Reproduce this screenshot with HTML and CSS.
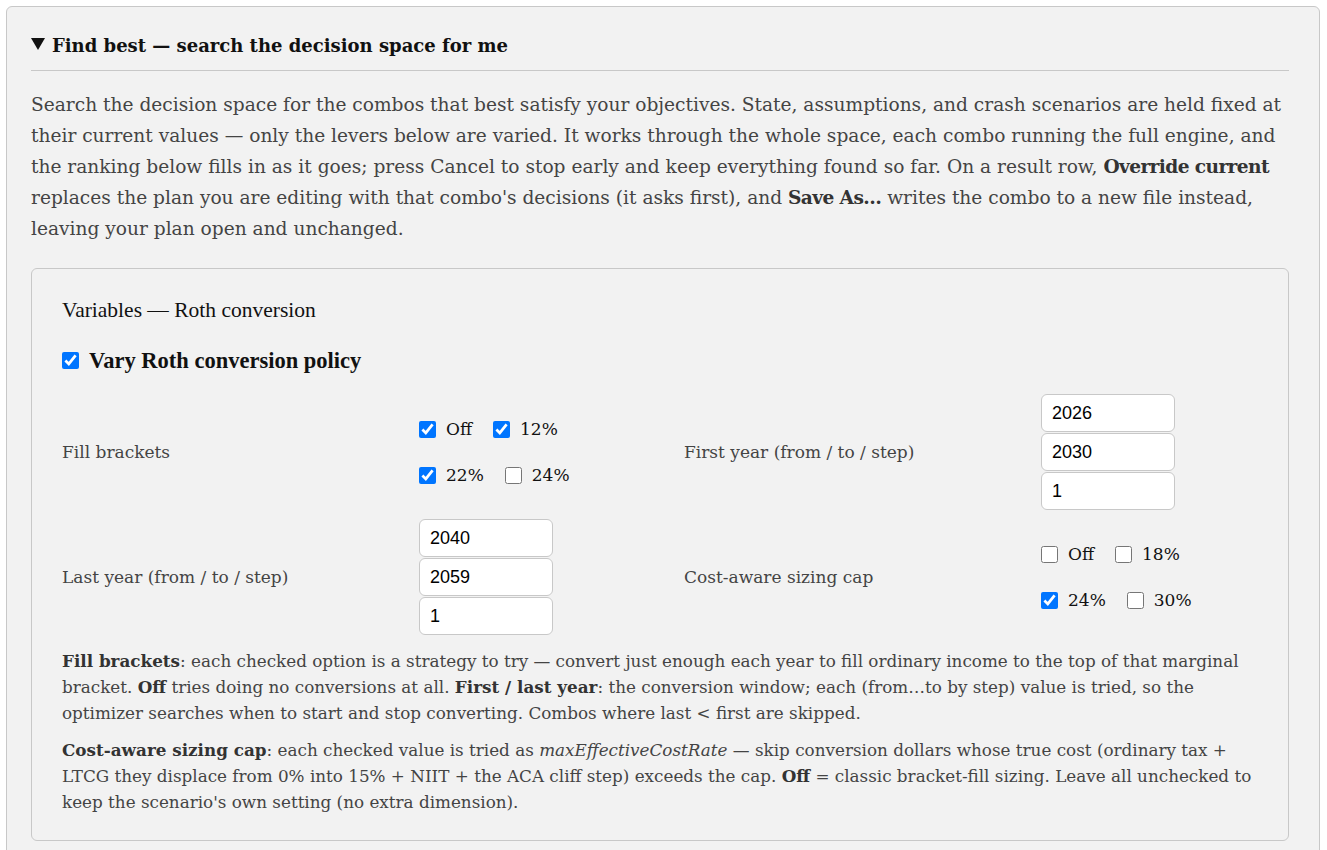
FILE: index.html
```html
<!DOCTYPE html>
<html lang="en">

<head>
  <meta charset="UTF-8">
  <meta name="viewport" content="width=device-width, initial-scale=1.0">
  <title>Find best</title>
  <link rel="stylesheet" href="styles.css">
</head>

<body>
  <details class="finder" open>
    <summary>Find best — search the decision space for me</summary>
    <p class="intro">Search the decision space for the combos that best satisfy your objectives. State, assumptions, and crash scenarios are held fixed at their current values — only the levers below are varied. It works through the whole space, each combo running the full engine, and the ranking below fills in as it goes; press Cancel to stop early and keep everything found so far. On a result row, <b>Override current</b> replaces the plan you are editing with that combo's decisions (it asks first), and <b>Save As…</b> writes the combo to a new file instead, leaving your plan open and unchanged.</p>

    <fieldset class="group">
      <div class="group-title">Variables — Roth conversion</div>
      <label class="vary"><input type="checkbox" checked> Vary Roth conversion policy</label>

      <div class="grid">
        <div class="label">Fill brackets</div>
        <div class="checks">
          <div class="check-row">
            <label><input type="checkbox" checked> Off</label>
            <label><input type="checkbox" checked> 12%</label>
          </div>
          <div class="check-row">
            <label><input type="checkbox" checked> 22%</label>
            <label><input type="checkbox"> 24%</label>
          </div>
        </div>
        <div class="label">First year (from / to / step)</div>
        <div class="range">
          <input type="text" value="2026">
          <input type="text" value="2030">
          <input type="text" value="1">
        </div>

        <div class="label">Last year (from / to / step)</div>
        <div class="range">
          <input type="text" value="2040">
          <input type="text" value="2059">
          <input type="text" value="1">
        </div>
        <div class="label">Cost-aware sizing cap</div>
        <div class="checks">
          <div class="check-row">
            <label><input type="checkbox"> Off</label>
            <label><input type="checkbox"> 18%</label>
          </div>
          <div class="check-row">
            <label><input type="checkbox" checked> 24%</label>
            <label><input type="checkbox"> 30%</label>
          </div>
        </div>
      </div>

      <p class="note"><b>Fill brackets</b>: each checked option is a strategy to try — convert just enough each year to fill ordinary income to the top of that marginal bracket. <b>Off</b> tries doing no conversions at all. <b>First / last year</b>: the conversion window; each (from…to by step) value is tried, so the optimizer searches when to start and stop converting. Combos where last &lt; first are skipped.</p>
      <p class="note"><b>Cost-aware sizing cap</b>: each checked value is tried as <i>maxEffectiveCostRate</i> — skip conversion dollars whose true cost (ordinary tax + LTCG they displace from 0% into 15% + NIIT + the ACA cliff step) exceeds the cap. <b>Off</b> = classic bracket-fill sizing. Leave all unchecked to keep the scenario's own setting (no extra dimension).</p>
    </fieldset>
  </details>
</body>

</html>
```

FILE: styles.css
```css
* {
  box-sizing: border-box;
}

body {
  margin: 0;
  padding: 6px 7px 0 6px;
  background: #fff;
  font-family: 'DejaVu Serif', serif;
  color: #222;
}

.finder {
  background: #f2f2f2;
  border: 1px solid #c8c8c8;
  border-radius: 6px;
  padding: 28px 30px 0 24px;
  min-height: 900px;
}

.finder summary {
  list-style: none;
  font-size: 18px;
  font-weight: bold;
  color: #111;
  padding-bottom: 14px;
  border-bottom: 1px solid #c8c8c8;
  cursor: pointer;
}

.finder summary::-webkit-details-marker {
  display: none;
}

/* open-state marker, drawn as a css triangle */
.finder summary::before {
  content: '';
  display: inline-block;
  border-left: 7px solid transparent;
  border-right: 7px solid transparent;
  border-top: 12px solid #111;
  margin-right: 7px;
  vertical-align: 2px;
}

.intro {
  margin: 18px 0 24px;
  font-size: 18.6px;
  line-height: 31px;
  color: #444;
}

.intro b {
  color: #333;
  letter-spacing: -0.6px;
}

.group {
  margin: 0;
  border: 1px solid #c8c8c8;
  border-radius: 6px;
  padding: 29px 30px 25px;
}

.group-title {
  font-family: 'Liberation Serif', serif;
  font-size: 21.5px;
  line-height: 24px;
  color: #111;
  margin-bottom: 26px;
}

.vary {
  display: flex;
  align-items: center;
  gap: 8px;
  font-family: 'Liberation Serif', serif;
  font-weight: bold;
  font-size: 22.5px;
  line-height: 25px;
  color: #111;
}

.vary input {
  margin: 0 2px 0 0;
  width: 17px;
  height: 17px;
}

.grid {
  display: grid;
  grid-template-columns: 357px 265px 357px 1fr;
  row-gap: 9px;
  align-items: center;
  margin-top: 21px;
}

.label {
  font-size: 17px;
  color: #444;
}

.checks {
  display: flex;
  flex-direction: column;
  gap: 26px;
  font-size: 17px;
  color: #111;
}

.check-row {
  display: flex;
  gap: 21px;
}

.check-row label {
  display: flex;
  align-items: center;
  gap: 10px;
}

.check-row input {
  margin: 0;
  width: 17px;
  height: 17px;
}

.range {
  display: flex;
  flex-direction: column;
  gap: 1px;
}

.range input {
  width: 134px;
  height: 38px;
  border: 1px solid #c8c8c8;
  border-radius: 6px;
  background: #fff;
  padding: 0 10px;
  font-family: 'Liberation Sans', sans-serif;
  font-size: 18px;
  color: #000;
}

.note {
  margin: 13px 0 0;
  font-size: 16.8px;
  line-height: 26px;
  color: #444;
}

.note + .note {
  margin-top: 11px;
}

.note b {
  color: #333;
}
```
